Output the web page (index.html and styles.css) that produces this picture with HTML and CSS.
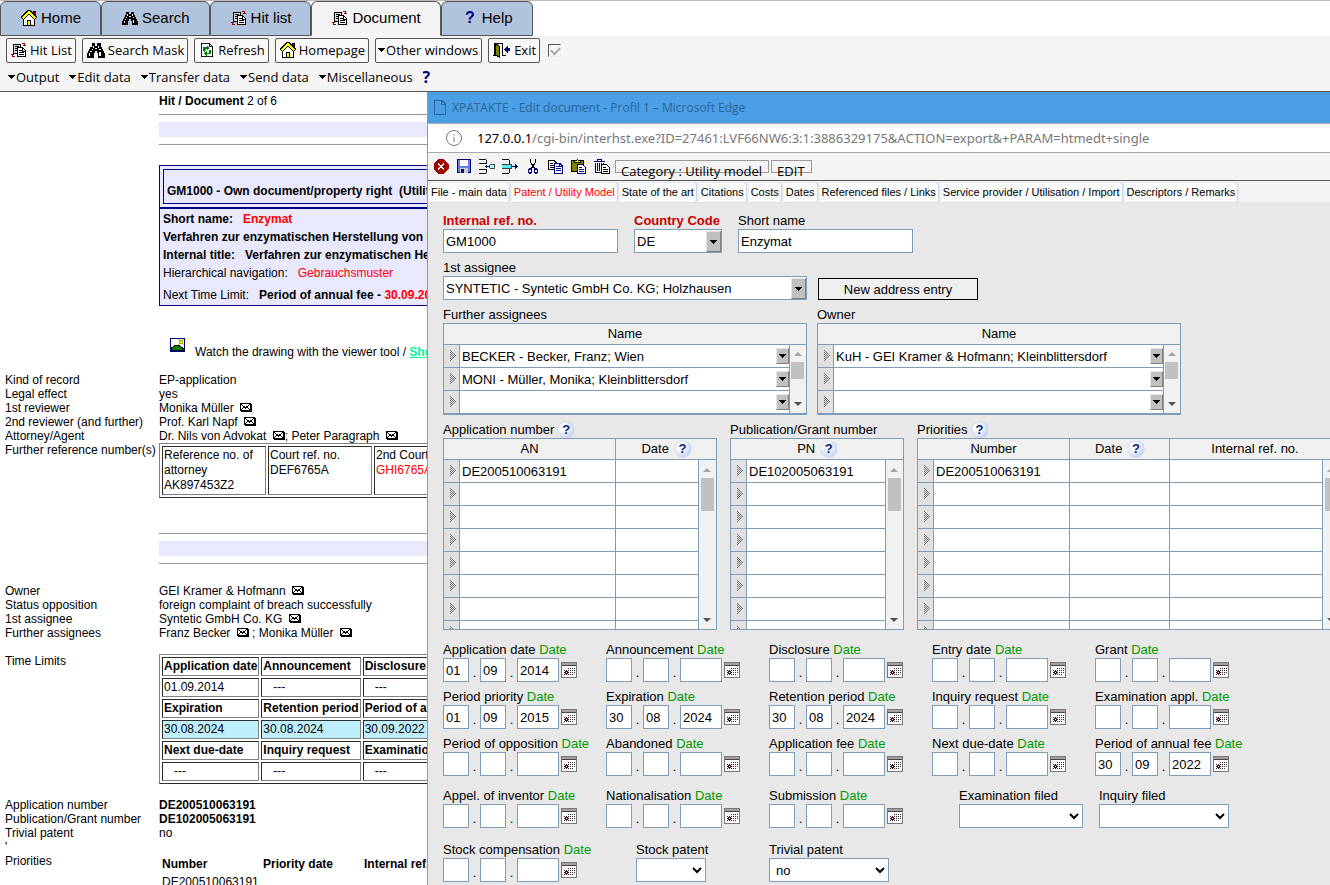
FILE: index.html
```html
<!DOCTYPE html>
<html lang="en">

<head>
    <meta charset="UTF-8">
    <meta name="viewport" content="width=device-width, initial-scale=1.0">
    <title>XPATAKTE - Document</title>
    <link rel="stylesheet" href="styles.css">
</head>

<body>
    <!-- icon sprite -->
    <svg class="sprite" aria-hidden="true">
        <defs>
            <pattern id="dither" width="2" height="2" patternUnits="userSpaceOnUse">
                <path fill="#777" d="M0 0h1v1H0zM1 1h1v1H1z" />
            </pattern>
        </defs>
        <symbol id="i-home" viewBox="0 0 16 16">
            <path fill="#c00" stroke="#000" d="M12.500 1.500h2v5h-2z" />
            <path fill="#fff" stroke="#000" d="M2.500 8v7.500h11V8L8 3z" />
            <path d="M1 8.500L8 1.500l7 7" fill="none" stroke="#000" stroke-width="4" />
            <path d="M1.500 8.500L8 2l6.500 6.500" fill="none" stroke="#ff0" stroke-width="2" />
            <path fill="#ff0" stroke="#000" d="M6.500 10.500h3v5h-3z" />
        </symbol>
        <symbol id="i-search" viewBox="0 0 16 14">
            <path d="M4 1h3v2h2V1h3v3h1v2h1v2h1v2h1v4h-6v-4H9V8H7v2H6v4H0v-4h1V8h1V6h1V4h1z" />
            <path fill="#fff" d="M5 3h1v2H5zM4 6h1v1H4zM3 8h1v1H3zM2 10h1v2H2zM10 3h1v2h-1zM11 6h1v1h-1zM11 9h1v3h-1zM7 5h2v1H7z" />
        </symbol>
        <symbol id="i-docs" viewBox="0 0 16 16">
            <path fill="#ddd" stroke="#000" d="M2.500 2.500h7v9h-7z" />
            <path stroke="#000" d="M4 4.500h4M4 6.500h2M4 8.500h2" />
            <path fill="#fff" stroke="#000" d="M6.500 5.500h5l3 3v6h-8z" />
            <path stroke="#000" d="M8 8.500h3M8 10.500h5M8 12.500h5M11.500 6v3h3" fill="none" />
            <path stroke="#900" fill="none" d="M11 1.500h2.500V4M12 3.500h3M0 12.500h3M1.500 12v2.500H4" />
        </symbol>
        <symbol id="i-refresh" viewBox="0 0 16 18">
            <path fill="#fff" stroke="#000" d="M1.500 1.500h9l4 4v11h-13z" />
            <path fill="none" stroke="#000" d="M10.500 1.500v4h4" />
            <path fill="none" stroke="#008000" stroke-width="2" d="M5 9V7h4M11 9v4H7" />
            <path fill="#008000" d="M8 4l3 3-3 3zM8 10l-3 3 3 3zM3 8h4l-2 3z" />
        </symbol>
        <symbol id="i-exit" viewBox="0 0 18 16">
            <path fill="none" stroke="#000" d="M0 13.500h3M1.500 13V1.500h8v12h3" />
            <path fill="#808000" stroke="#000" d="M2.500 1.500l4 3v11l-4-3z" />
            <path fill="#000080" d="M11 7l4-4v3h2v3h-2v3z" />
        </symbol>
        <symbol id="i-arrow" viewBox="0 0 7 4">
            <path d="M0 0h7L3.500 4z" />
        </symbol>
        <symbol id="i-mail" viewBox="0 0 12 9">
            <path fill="#fff" stroke="#000" d="M.5.500h10v7H.5z" />
            <path fill="none" stroke="#000" d="M1 1l4.500 4L10 1M1 7l3-3M10 7L7 4" />
            <path d="M11 1h1v8H1V8h10z" />
        </symbol>
        <symbol id="i-picture" viewBox="0 0 15 14">
            <path fill="#fff" stroke="#000080" d="M.5.500h14v13H.5z" />
            <path fill="#008000" stroke="#000" d="M1 12.500V10l2-1 2-2 2 1 1-1 3 2 3 2v1.500z" />
            <circle cx="11" cy="4" r="2" fill="#ff0" stroke="#aa0" />
            <path stroke="#cc0" d="M8 1l1 1M14 1l-1 1M8 7l1-1M13 6l1 1" />
        </symbol>
        <symbol id="i-page" viewBox="0 0 12 15">
            <path fill="none" stroke="#2b6599" d="M.5 1.500q0-1 1-1H8l3.500 3.500v9.500q0 1-1 1h-9q-1 0-1-1zM7.500.500V4.500h4" />
        </symbol>
        <symbol id="i-info" viewBox="0 0 16 16">
            <circle cx="8" cy="8" r="7.500" fill="none" stroke="#777" />
            <path fill="#777" d="M7.500 7h1v5h-1zM7.500 4h1v1.500h-1z" />
        </symbol>
        <symbol id="i-close" viewBox="0 0 16 16">
            <path fill="#a00000" d="M5 0h6l5 5v6l-5 5H5l-5-5V5z" />
            <path stroke="#fff" stroke-width="2" d="M5 5l6 6M11 5l-6 6" />
        </symbol>
        <symbol id="i-save" viewBox="0 0 15 15">
            <path fill="#6a7ae0" stroke="#000080" d="M.5.500h13v13h-12l-1-1z" />
            <path fill="#fff" d="M3 1h8v6H3z" />
            <path fill="#ccc" d="M3 9h8v5H3z" />
            <path fill="#000080" d="M4 10h3v4H4z" />
        </symbol>
        <symbol id="i-insert" viewBox="0 0 17 15">
            <path fill="none" stroke="#000" d="M0 .5h7.500v4H0M0 14.500h7.500v-4H0" />
            <path fill="#000080" d="M6 7.500L9 5v2h2v1H9v2z" />
            <path fill="#aff" stroke="#333" d="M11.500 5.500h5v4h-5z" />
        </symbol>
        <symbol id="i-append" viewBox="0 0 17 15">
            <path fill="none" stroke="#000" d="M0 .5h7.500v4M0 14.500h7.500v-4" />
            <path fill="#5ee" stroke="#333" d="M0 5.500h10.500v4H0" />
            <path fill="#000080" d="M11 7h3V5l3 2.500L14 10V8h-3z" />
        </symbol>
        <symbol id="i-cut" viewBox="0 0 11 15">
            <path fill="none" stroke="#000" d="M3 0v3l3.500 6M8 0v3L4.500 9" />
            <path fill="none" stroke="#000080" stroke-width="1.500" d="M4.500 8.500l-1.500 1.500h-1l-1 1v2l1 1h1l1-1V9.500zM6.500 8.500L8 10h1l1 1v2l-1 1H8l-1-1V9.500z" />
        </symbol>
        <symbol id="i-copy" viewBox="0 0 16 14">
            <path fill="#fff" stroke="#000" d="M.5.500h5l3 3v6h-8z" />
            <path stroke="#000" d="M2 3.500h3M2 5.500h4M2 7.500h4" />
            <path fill="#fff" stroke="#000080" d="M6.500 3.500h5l3 3v7h-8z" />
            <path stroke="#000080" fill="none" d="M8 6.500h3M8 8.500h5M8 10.500h5M11.500 4v3h3" />
        </symbol>
        <symbol id="i-paste" viewBox="0 0 16 15">
            <path fill="#808000" stroke="#000" d="M.5 1.500h12v11H.5z" />
            <path fill="#ff0" stroke="#000" d="M3.500 3.500v-2h2l1-1 1 1h2v2z" />
            <path fill="#fff" stroke="#000080" d="M6.500 5.500h5l3 3v6h-8z" />
            <path stroke="#000080" fill="none" d="M8 8.500h3M8 10.500h5M8 12.500h5" />
        </symbol>
        <symbol id="i-trash" viewBox="0 0 16 15">
            <path fill="none" stroke="#000080" d="M0 2.500h11M3.500 2V.500h4V2M1.500 4v9.500h8V4M3.500 4v8M5.500 4v8M7.500 4v8" />
            <path fill="#fff" stroke="#000" d="M7.500 5.500h5l3 3v6h-8z" />
            <path stroke="#000" fill="none" d="M9 8.500h3M9 10.500h5M9 12.500h5" />
        </symbol>
        <symbol id="i-cal" viewBox="0 0 16 16">
            <path fill="#fff" stroke="#777" d="M.5.500h15v15H.5z" />
            <path fill="#a8a0a0" d="M1 1h14v2H1z" />
            <path stroke="#444" d="M1 3.500h14" />
            <path fill="#412" d="M3 8h1v1H3zM5 8h1v1H5zM7 8h1v1H7zM4 9h3v1H4zM3 10h2v1H3zM6 10h2v1H6zM4 11h3v1H4zM3 12h1v1H3zM5 12h1v1H5zM7 12h1v1H7z" />
            <path fill="#333" d="M7 6h1v1H7zM9 6h1v1H9zM11 6h1v1h-1zM13 6h1v1h-1zM9 8h1v1H9zM11 8h1v1h-1zM13 8h1v1h-1zM9 10h1v1H9zM11 10h1v1h-1zM13 10h1v1h-1zM9 12h1v1H9zM11 12h1v1h-1z" />
        </symbol>
        <symbol id="i-mark" viewBox="0 0 6 12">
            <path fill="url(#dither)" d="M0 0l6 6-6 6z" />
        </symbol>
    </svg>

    <header class="top">
        <nav class="main-tabs">
            <a href="#"><svg class="icon"><use href="#i-home" /></svg>Home</a>
            <a href="#"><svg class="icon"><use href="#i-search" /></svg>Search</a>
            <a href="#"><svg class="icon"><use href="#i-docs" /></svg>Hit list</a>
            <a href="#" class="active"><svg class="icon"><use href="#i-docs" /></svg>Document</a>
            <a href="#"><b class="q">?</b>Help</a>
        </nav>
        <div class="toolbar">
            <button type="button"><svg class="icon"><use href="#i-docs" /></svg>Hit List</button>
            <button type="button"><svg class="icon wide"><use href="#i-search" /></svg>Search Mask</button>
            <button type="button"><svg class="icon"><use href="#i-refresh" /></svg>Refresh</button>
            <button type="button"><svg class="icon"><use href="#i-home" /></svg>Homepage</button>
            <button type="button" class="drop-btn"><svg class="arrow"><use href="#i-arrow" /></svg>Other windows</button>
            <button type="button"><svg class="icon wide"><use href="#i-exit" /></svg>Exit</button>
            <input type="checkbox" class="keep" aria-label="Keep window" checked disabled>
        </div>
        <nav class="menu">
            <a href="#"><svg class="arrow"><use href="#i-arrow" /></svg>Output</a>
            <a href="#"><svg class="arrow"><use href="#i-arrow" /></svg>Edit data</a>
            <a href="#"><svg class="arrow"><use href="#i-arrow" /></svg>Transfer data</a>
            <a href="#"><svg class="arrow"><use href="#i-arrow" /></svg>Send data</a>
            <a href="#"><svg class="arrow"><use href="#i-arrow" /></svg>Miscellaneous</a>
            <a href="#"><b class="q">?</b></a>
        </nav>
    </header>

    <main class="desk">
        <section class="doc">
            <div class="doc-body">
                <p class="hit"><b>Hit / Document</b> 2 of 6</p>
                <div class="band"></div>
                <div class="summary">
                    <div class="summary-head"><h1>GM1000 - Own document/property right&nbsp; (Utility model)</h1></div>
                    <div class="summary-text">
                        <p><b>Short name:</b> <b class="red">Enzymat</b></p>
                        <p><b>Verfahren zur enzymatischen Herstellung von Glucose</b></p>
                        <p><b>Internal title:</b> <b>Verfahren zur enzymatischen Herstellung</b></p>
                        <p><span>Hierarchical navigation:</span> <span class="red">Gebrauchsmuster</span></p>
                        <p class="limit"><span>Next Time Limit:</span> <b>Period of annual fee - <span class="red">30.09.2022</span></b></p>
                    </div>
                </div>
                <p class="viewer"><svg><use href="#i-picture" /></svg><span>Watch the drawing with the viewer tool / <a href="#">Show</a></span></p>
            </div>

            <dl class="facts">
                <dt>Kind of record</dt>
                <dd>EP-application</dd>
                <dt>Legal effect</dt>
                <dd>yes</dd>
                <dt>1st reviewer</dt>
                <dd>Monika Müller <svg class="mail"><use href="#i-mail" /></svg></dd>
                <dt>2nd reviewer (and further)</dt>
                <dd>Prof. Karl Napf <svg class="mail"><use href="#i-mail" /></svg></dd>
                <dt>Attorney/Agent</dt>
                <dd>Dr. Nils von Advokat <svg class="mail"><use href="#i-mail" /></svg>; Peter Paragraph <svg class="mail"><use href="#i-mail" /></svg></dd>
                <dt>Further reference number(s)</dt>
                <dd>
                    <table class="boxed refs">
                        <tr>
                            <td>Reference no. of<br>attorney<br>AK897453Z2</td>
                            <td>Court ref. no.<br>DEF6765A</td>
                            <td>2nd Court ref.<br><span class="red">GHI6765A</span></td>
                        </tr>
                    </table>
                </dd>
            </dl>

            <div class="doc-body second">
                <div class="band"></div>
            </div>

            <dl class="facts">
                <dt>Owner</dt>
                <dd>GEI Kramer &amp; Hofmann <svg class="mail"><use href="#i-mail" /></svg></dd>
                <dt>Status opposition</dt>
                <dd>foreign complaint of breach successfully</dd>
                <dt>1st assignee</dt>
                <dd>Syntetic GmbH Co. KG <svg class="mail"><use href="#i-mail" /></svg></dd>
                <dt>Further assignees</dt>
                <dd>Franz Becker <svg class="mail"><use href="#i-mail" /></svg> ; Monika Müller <svg class="mail"><use href="#i-mail" /></svg></dd>
            </dl>
            <dl class="facts">
                <dt>Time Limits</dt>
                <dd>
                    <table class="boxed limits">
                        <tr><th>Application date</th><th>Announcement</th><th>Disclosure</th></tr>
                        <tr><td>01.09.2014</td><td class="none">---</td><td class="none">---</td></tr>
                        <tr><th>Expiration</th><th>Retention period</th><th>Period of annual fee</th></tr>
                        <tr class="due"><td>30.08.2024</td><td>30.08.2024</td><td>30.09.2022</td></tr>
                        <tr><th>Next due-date</th><th>Inquiry request</th><th>Examination appl.</th></tr>
                        <tr><td class="none">---</td><td class="none">---</td><td class="none">---</td></tr>
                    </table>
                </dd>
            </dl>
            <dl class="facts">
                <dt>Application number</dt>
                <dd><b>DE200510063191</b></dd>
                <dt>Publication/Grant number</dt>
                <dd><b>DE102005063191</b></dd>
                <dt>Trivial patent</dt>
                <dd>no</dd>
                <dt>'</dt>
                <dd></dd>
                <dt>Priorities</dt>
                <dd>
                    <table class="plain">
                        <tr><th>Number</th><th>Priority date</th><th>Internal ref. no.</th></tr>
                        <tr><td>DE200510063191</td><td></td><td></td></tr>
                    </table>
                </dd>
            </dl>
        </section>

        <section class="window">
            <div class="title-bar"><svg><use href="#i-page" /></svg>XPATAKTE - Edit document - Profil 1 – Microsoft Edge</div>
            <div class="address-bar"><svg><use href="#i-info" /></svg><p><b>127.0.0.1</b>/cgi-bin/interhst.exe?ID=27461:LVF66NW6:3:1:3886329175&amp;ACTION=export&amp;+PARAM=htmedt+single</p></div>
            <div class="edit-bar">
                <button type="button" aria-label="Close"><svg><use href="#i-close" /></svg></button>
                <button type="button" aria-label="Save"><svg><use href="#i-save" /></svg></button>
                <button type="button" aria-label="Insert row"><svg><use href="#i-insert" /></svg></button>
                <button type="button" aria-label="Append row"><svg><use href="#i-append" /></svg></button>
                <button type="button" aria-label="Cut"><svg><use href="#i-cut" /></svg></button>
                <button type="button" aria-label="Copy"><svg><use href="#i-copy" /></svg></button>
                <button type="button" aria-label="Paste"><svg><use href="#i-paste" /></svg></button>
                <button type="button" aria-label="Delete"><svg><use href="#i-trash" /></svg></button>
                <span class="status">Category : Utility model</span>
                <span class="status">EDIT</span>
            </div>
            <nav class="form-tabs">
                <a href="#">File - main data</a>
                <a href="#" class="active">Patent / Utility Model</a>
                <a href="#">State of the art</a>
                <a href="#">Citations</a>
                <a href="#">Costs</a>
                <a href="#">Dates</a>
                <a href="#">Referenced files / Links</a>
                <a href="#">Service provider / Utilisation / Import</a>
                <a href="#">Descriptors / Remarks</a>
            </nav>

            <form class="form">
                <div class="row head-row">
                    <div class="field w-text">
                        <label for="ref" class="must">Internal ref. no.</label>
                        <input type="text" id="ref" value="GM1000">
                    </div>
                    <div class="field w-code">
                        <label for="country" class="must">Country Code</label>
                        <div class="combo"><select id="country"><option>DE</option></select><span class="drop"><svg class="arrow"><use href="#i-arrow" /></svg></span></div>
                    </div>
                    <div class="field w-text">
                        <label for="short">Short name</label>
                        <input type="text" id="short" value="Enzymat">
                    </div>
                </div>

                <div class="row pair-row">
                    <div class="field w-name">
                        <label for="assignee">1st assignee</label>
                        <div class="combo"><select id="assignee"><option>SYNTETIC - Syntetic GmbH Co. KG; Holzhausen</option></select><span class="drop"><svg class="arrow"><use href="#i-arrow" /></svg></span></div>
                    </div>
                    <button type="button" class="new-address">New address entry</button>
                </div>

                <div class="row pair-row">
                    <div class="field w-name">
                        <span class="caption">Further assignees</span>
                        <table class="grid names">
                            <colgroup><col class="c-mark"><col><col class="c-bar"></colgroup>
                            <tr><th colspan="3">Name</th></tr>
                            <tr>
                                <td class="mark"><svg><use href="#i-mark" /></svg></td>
                                <td><div class="pick"><input type="text" aria-label="Further assignee 1" value="BECKER - Becker, Franz; Wien"><button type="button" class="drop" aria-label="Choose"><svg class="arrow"><use href="#i-arrow" /></svg></button></div></td>
                                <td rowspan="3" class="bar"><div class="scroll"><i class="up"></i><i class="thumb"></i><i class="down"></i></div></td>
                            </tr>
                            <tr>
                                <td class="mark"><svg><use href="#i-mark" /></svg></td>
                                <td><div class="pick"><input type="text" aria-label="Further assignee 2" value="MONI - Müller, Monika; Kleinblittersdorf"><button type="button" class="drop" aria-label="Choose"><svg class="arrow"><use href="#i-arrow" /></svg></button></div></td>
                            </tr>
                            <tr>
                                <td class="mark"><svg><use href="#i-mark" /></svg></td>
                                <td><div class="pick"><input type="text" aria-label="Further assignee 3"><button type="button" class="drop" aria-label="Choose"><svg class="arrow"><use href="#i-arrow" /></svg></button></div></td>
                            </tr>
                        </table>
                    </div>
                    <div class="field w-name">
                        <span class="caption">Owner</span>
                        <table class="grid names">
                            <colgroup><col class="c-mark"><col><col class="c-bar"></colgroup>
                            <tr><th colspan="3">Name</th></tr>
                            <tr>
                                <td class="mark"><svg><use href="#i-mark" /></svg></td>
                                <td><div class="pick"><input type="text" aria-label="Owner 1" value="KuH - GEI Kramer &amp; Hofmann; Kleinblittersdorf"><button type="button" class="drop" aria-label="Choose"><svg class="arrow"><use href="#i-arrow" /></svg></button></div></td>
                                <td rowspan="3" class="bar"><div class="scroll"><i class="up"></i><i class="thumb"></i><i class="down"></i></div></td>
                            </tr>
                            <tr>
                                <td class="mark"><svg><use href="#i-mark" /></svg></td>
                                <td><div class="pick"><input type="text" aria-label="Owner 2"><button type="button" class="drop" aria-label="Choose"><svg class="arrow"><use href="#i-arrow" /></svg></button></div></td>
                            </tr>
                            <tr>
                                <td class="mark"><svg><use href="#i-mark" /></svg></td>
                                <td><div class="pick"><input type="text" aria-label="Owner 3"><button type="button" class="drop" aria-label="Choose"><svg class="arrow"><use href="#i-arrow" /></svg></button></div></td>
                            </tr>
                        </table>
                    </div>
                </div>

                <div class="row number-row">
                    <div class="field">
                        <span class="caption">Application number <button type="button" class="help">?</button></span>
                        <table class="grid numbers an">
                            <colgroup><col class="c-mark"><col class="c-an"><col class="c-date"><col class="c-bar"></colgroup>
                            <tr><th colspan="2">AN</th><th colspan="2">Date <button type="button" class="help">?</button></th></tr>
                            <tr>
                                <td class="mark"><svg><use href="#i-mark" /></svg></td>
                                <td><input type="text" aria-label="AN" value="DE200510063191"></td>
                                <td><input type="text" aria-label="Date"></td>
                                <td rowspan="8" class="bar"><div class="scroll"><i class="up"></i><i class="thumb"></i><i class="down"></i></div></td>
                            </tr>
                            <tr><td class="mark"><svg><use href="#i-mark" /></svg></td><td></td><td></td></tr>
                            <tr><td class="mark"><svg><use href="#i-mark" /></svg></td><td></td><td></td></tr>
                            <tr><td class="mark"><svg><use href="#i-mark" /></svg></td><td></td><td></td></tr>
                            <tr><td class="mark"><svg><use href="#i-mark" /></svg></td><td></td><td></td></tr>
                            <tr><td class="mark"><svg><use href="#i-mark" /></svg></td><td></td><td></td></tr>
                            <tr><td class="mark"><svg><use href="#i-mark" /></svg></td><td></td><td></td></tr>
                            <tr class="cut"><td class="mark"><svg viewBox="0 0 6 3"><path fill="url(#dither)" d="M0 0l3 3H0z" /></svg></td><td></td><td></td></tr>
                        </table>
                    </div>
                    <div class="field">
                        <span class="caption">Publication/Grant number</span>
                        <table class="grid numbers pn">
                            <colgroup><col class="c-mark"><col><col class="c-bar"></colgroup>
                            <tr><th colspan="3">PN <button type="button" class="help">?</button></th></tr>
                            <tr>
                                <td class="mark"><svg><use href="#i-mark" /></svg></td>
                                <td><input type="text" aria-label="PN" value="DE102005063191"></td>
                                <td rowspan="8" class="bar"><div class="scroll"><i class="up"></i><i class="thumb"></i><i class="down"></i></div></td>
                            </tr>
                            <tr><td class="mark"><svg><use href="#i-mark" /></svg></td><td></td></tr>
                            <tr><td class="mark"><svg><use href="#i-mark" /></svg></td><td></td></tr>
                            <tr><td class="mark"><svg><use href="#i-mark" /></svg></td><td></td></tr>
                            <tr><td class="mark"><svg><use href="#i-mark" /></svg></td><td></td></tr>
                            <tr><td class="mark"><svg><use href="#i-mark" /></svg></td><td></td></tr>
                            <tr><td class="mark"><svg><use href="#i-mark" /></svg></td><td></td></tr>
                            <tr class="cut"><td class="mark"><svg viewBox="0 0 6 3"><path fill="url(#dither)" d="M0 0l3 3H0z" /></svg></td><td></td></tr>
                        </table>
                    </div>
                    <div class="field">
                        <span class="caption">Priorities <button type="button" class="help">?</button></span>
                        <table class="grid numbers prio">
                            <colgroup><col class="c-mark"><col class="c-prio"><col class="c-pdate"><col><col class="c-bar"></colgroup>
                            <tr><th colspan="2">Number</th><th>Date <button type="button" class="help">?</button></th><th colspan="2">Internal ref. no.</th></tr>
                            <tr>
                                <td class="mark"><svg><use href="#i-mark" /></svg></td>
                                <td><input type="text" aria-label="Priority number" value="DE200510063191"></td>
                                <td><input type="text" aria-label="Priority date"></td>
                                <td><input type="text" aria-label="Priority internal ref. no."></td>
                                <td rowspan="8" class="bar"><div class="scroll"><i class="up"></i><i class="thumb"></i><i class="down"></i></div></td>
                            </tr>
                            <tr><td class="mark"><svg><use href="#i-mark" /></svg></td><td></td><td></td><td></td></tr>
                            <tr><td class="mark"><svg><use href="#i-mark" /></svg></td><td></td><td></td><td></td></tr>
                            <tr><td class="mark"><svg><use href="#i-mark" /></svg></td><td></td><td></td><td></td></tr>
                            <tr><td class="mark"><svg><use href="#i-mark" /></svg></td><td></td><td></td><td></td></tr>
                            <tr><td class="mark"><svg><use href="#i-mark" /></svg></td><td></td><td></td><td></td></tr>
                            <tr><td class="mark"><svg><use href="#i-mark" /></svg></td><td></td><td></td><td></td></tr>
                            <tr class="cut"><td class="mark"><svg viewBox="0 0 6 3"><path fill="url(#dither)" d="M0 0l3 3H0z" /></svg></td><td></td><td></td><td></td></tr>
                        </table>
                    </div>
                </div>

                <div class="dates">
                    <div class="date">
                        <p><label for="d1">Application date</label> <a href="#">Date</a></p>
                        <div class="parts"><input id="d1" value="01"><i>.</i><input aria-label="Month" value="09"><i>.</i><input class="year" aria-label="Year" value="2014"><svg><use href="#i-cal" /></svg></div>
                    </div>
                    <div class="date">
                        <p><label for="d2">Announcement</label> <a href="#">Date</a></p>
                        <div class="parts"><input id="d2"><i>.</i><input aria-label="Month"><i>.</i><input class="year" aria-label="Year"><svg><use href="#i-cal" /></svg></div>
                    </div>
                    <div class="date">
                        <p><label for="d3">Disclosure</label> <a href="#">Date</a></p>
                        <div class="parts"><input id="d3"><i>.</i><input aria-label="Month"><i>.</i><input class="year" aria-label="Year"><svg><use href="#i-cal" /></svg></div>
                    </div>
                    <div class="date">
                        <p><label for="d4">Entry date</label> <a href="#">Date</a></p>
                        <div class="parts"><input id="d4"><i>.</i><input aria-label="Month"><i>.</i><input class="year" aria-label="Year"><svg><use href="#i-cal" /></svg></div>
                    </div>
                    <div class="date">
                        <p><label for="d5">Grant</label> <a href="#">Date</a></p>
                        <div class="parts"><input id="d5"><i>.</i><input aria-label="Month"><i>.</i><input class="year" aria-label="Year"><svg><use href="#i-cal" /></svg></div>
                    </div>
                    <div class="date">
                        <p><label for="d6">Period priority</label> <a href="#">Date</a></p>
                        <div class="parts"><input id="d6" value="01"><i>.</i><input aria-label="Month" value="09"><i>.</i><input class="year" aria-label="Year" value="2015"><svg><use href="#i-cal" /></svg></div>
                    </div>
                    <div class="date">
                        <p><label for="d7">Expiration</label> <a href="#">Date</a></p>
                        <div class="parts"><input id="d7" value="30"><i>.</i><input aria-label="Month" value="08"><i>.</i><input class="year" aria-label="Year" value="2024"><svg><use href="#i-cal" /></svg></div>
                    </div>
                    <div class="date">
                        <p><label for="d8">Retention period</label> <a href="#">Date</a></p>
                        <div class="parts"><input id="d8" value="30"><i>.</i><input aria-label="Month" value="08"><i>.</i><input class="year" aria-label="Year" value="2024"><svg><use href="#i-cal" /></svg></div>
                    </div>
                    <div class="date">
                        <p><label for="d9">Inquiry request</label> <a href="#">Date</a></p>
                        <div class="parts"><input id="d9"><i>.</i><input aria-label="Month"><i>.</i><input class="year" aria-label="Year"><svg><use href="#i-cal" /></svg></div>
                    </div>
                    <div class="date">
                        <p><label for="d10">Examination appl.</label> <a href="#">Date</a></p>
                        <div class="parts"><input id="d10"><i>.</i><input aria-label="Month"><i>.</i><input class="year" aria-label="Year"><svg><use href="#i-cal" /></svg></div>
                    </div>
                    <div class="date">
                        <p><label for="d11">Period of opposition</label> <a href="#">Date</a></p>
                        <div class="parts"><input id="d11"><i>.</i><input aria-label="Month"><i>.</i><input class="year" aria-label="Year"><svg><use href="#i-cal" /></svg></div>
                    </div>
                    <div class="date">
                        <p><label for="d12">Abandoned</label> <a href="#">Date</a></p>
                        <div class="parts"><input id="d12"><i>.</i><input aria-label="Month"><i>.</i><input class="year" aria-label="Year"><svg><use href="#i-cal" /></svg></div>
                    </div>
                    <div class="date">
                        <p><label for="d13">Application fee</label> <a href="#">Date</a></p>
                        <div class="parts"><input id="d13"><i>.</i><input aria-label="Month"><i>.</i><input class="year" aria-label="Year"><svg><use href="#i-cal" /></svg></div>
                    </div>
                    <div class="date">
                        <p><label for="d14">Next due-date</label> <a href="#">Date</a></p>
                        <div class="parts"><input id="d14"><i>.</i><input aria-label="Month"><i>.</i><input class="year" aria-label="Year"><svg><use href="#i-cal" /></svg></div>
                    </div>
                    <div class="date">
                        <p><label for="d15">Period of annual fee</label> <a href="#">Date</a></p>
                        <div class="parts"><input id="d15" value="30"><i>.</i><input aria-label="Month" value="09"><i>.</i><input class="year" aria-label="Year" value="2022"><svg><use href="#i-cal" /></svg></div>
                    </div>
                </div>

                <div class="row last-row">
                    <div class="date">
                        <p><label for="d16">Appel. of inventor</label> <a href="#">Date</a></p>
                        <div class="parts"><input id="d16"><i>.</i><input aria-label="Month"><i>.</i><input class="year" aria-label="Year"><svg><use href="#i-cal" /></svg></div>
                    </div>
                    <div class="date">
                        <p><label for="d17">Nationalisation</label> <a href="#">Date</a></p>
                        <div class="parts"><input id="d17"><i>.</i><input aria-label="Month"><i>.</i><input class="year" aria-label="Year"><svg><use href="#i-cal" /></svg></div>
                    </div>
                    <div class="date">
                        <p><label for="d18">Submission</label> <a href="#">Date</a></p>
                        <div class="parts"><input id="d18"><i>.</i><input aria-label="Month"><i>.</i><input class="year" aria-label="Year"><svg><use href="#i-cal" /></svg></div>
                    </div>
                    <div class="field exam">
                        <label for="exam">Examination filed</label>
                        <select id="exam"><option></option></select>
                    </div>
                    <div class="field inquiry">
                        <label for="inquiry">Inquiry filed</label>
                        <select id="inquiry"><option></option></select>
                    </div>
                </div>

                <div class="row last-row">
                    <div class="date">
                        <p><label for="d19">Stock compensation</label> <a href="#">Date</a></p>
                        <div class="parts"><input id="d19"><i>.</i><input aria-label="Month"><i>.</i><input class="year" aria-label="Year"><svg><use href="#i-cal" /></svg></div>
                    </div>
                    <div class="field stock">
                        <label for="stock">Stock patent</label>
                        <select id="stock"><option></option></select>
                    </div>
                    <div class="field trivial">
                        <label for="trivial">Trivial patent</label>
                        <select id="trivial"><option>no</option></select>
                    </div>
                </div>
            </form>
        </section>
    </main>
</body>

</html>
```
FILE: styles.css
```css
* {
    margin: 0;
    padding: 0;
    box-sizing: border-box;
}

body {
    display: flex;
    flex-direction: column;
    height: 100vh;
    overflow: hidden;
    background: #fff;
    color: #000;
    font: 12px/14px "Liberation Sans", Arial, sans-serif;
}

a {
    color: inherit;
    text-decoration: none;
}

i {
    font-style: normal;
}

svg {
    flex: none;
    shape-rendering: crispEdges;
}

.sprite {
    position: absolute;
    width: 0;
    height: 0;
}

.icon {
    width: 16px;
    height: 16px;
}

.icon.wide {
    width: 18px;
}

.arrow {
    width: 7px;
    height: 4px;
}

.q {
    color: #000080;
    font-size: 16px;
}

.red {
    color: #f00;
}

/* header */
.top {
    flex: none;
    background: #f4f4f4;
    border-bottom: 1px solid #555;
}

.main-tabs {
    display: flex;
    height: 36px;
    background: #fff;
    border-top: 1px solid #bbb;
}

.main-tabs a {
    display: flex;
    align-items: center;
    gap: 4px;
    padding: 0 19px 2px 20px;
    background: #b0c4de;
    border: 1px solid #555;
    border-radius: 6px 6px 0 0;
    font-size: 15px;
}

.main-tabs a.active {
    background: #f4f4f4;
    border-bottom-color: #f4f4f4;
}

.main-tabs .q {
    width: 16px;
    text-align: center;
}

.toolbar {
    display: flex;
    align-items: center;
    gap: 6px;
    padding: 2px 6px 0;
}

.toolbar button {
    display: flex;
    align-items: center;
    gap: 3px;
    height: 25px;
    padding: 0 3px 2px 4px;
    background: #f8f8f8;
    border: 1px solid #555;
    border-radius: 2px;
    font: 13px/20px "Open Sans", sans-serif;
}

.toolbar .drop-btn {
    gap: 1px;
    padding-left: 2px;
}

.keep {
    appearance: none;
    width: 13px;
    height: 13px;
    margin-left: 2px;
    border: 1px solid;
    border-color: #555 #eee #eee #555;
}

.keep::after {
    content: "";
    display: block;
    width: 7px;
    height: 4px;
    margin: 2px;
    border: solid #aaa;
    border-width: 0 0 2px 2px;
    transform: rotate(-45deg);
}

.menu {
    display: flex;
    align-items: center;
    gap: 10px;
    height: 28px;
    padding: 0 8px;
    font: 13px/20px "Open Sans", sans-serif;
}

.menu a {
    display: flex;
    align-items: center;
    gap: 1px;
}

.desk {
    display: flex;
    flex: 1;
    min-height: 0;
}

/* document view */
.doc {
    flex: 0 0 427px;
    overflow: hidden;
    padding-left: 5px;
    white-space: nowrap;
}

.doc-body {
    padding: 2px 0 14px 154px;
}

.doc-body.second {
    padding: 21px 0 20px 154px;
}

.hit {
    margin-bottom: 6px;
}

.band {
    height: 31px;
    border: solid #999;
    border-width: 1px 0;
    background: #e8e8ff content-box;
    padding: 7px 0;
}

.summary {
    width: 600px;
    margin-top: 20px;
    background: #e8e8ff;
    border: 1px solid #000080;
}

.summary-head {
    padding: 3px;
    border-bottom: 2px solid #000080;
}

.summary-head h1 {
    padding: 14px 3px 5px;
    border: 1px solid #000080;
    font-size: 12px;
    line-height: 14px;
}

.summary-text {
    padding: 1px 3px;
    line-height: 18px;
}

.summary-text p {
    display: flex;
    gap: 10px;
}

.summary-text .limit {
    margin-top: 4px;
}

.viewer {
    display: flex;
    gap: 10px;
    padding: 32px 0 0 11px;
}

.viewer svg {
    width: 15px;
    height: 14px;
}

.viewer span {
    padding-top: 7px;
}

.viewer a {
    color: #00fa9a;
    font-weight: bold;
    text-decoration: underline;
}

.facts {
    display: grid;
    grid-template-columns: 154px 1fr;
    margin-bottom: 14px;
}

.facts dt {
    height: 14px;
}

.mail {
    width: 12px;
    height: 9px;
    margin-left: 3px;
}

.boxed {
    border: 1px solid;
    border-color: #808080 #2c2c2c #2c2c2c #808080;
    border-spacing: 2px;
    line-height: 15px;
}

.boxed td,
.boxed th {
    padding: 1px;
    border: 1px solid;
    border-color: #2c2c2c #808080 #808080 #2c2c2c;
    text-align: left;
    vertical-align: top;
}

.boxed .none {
    padding-left: 11px;
}

.boxed .due td {
    background: #bfefff;
}

.refs td {
    min-width: 104px;
}

.plain {
    border-spacing: 3px;
    line-height: 15px;
    text-align: left;
}

.plain th {
    min-width: 98px;
}

/* popup window */
.window {
    flex: 1;
    min-width: 0;
    overflow: hidden;
    background: #e8e8e8;
    border-left: 1px solid #999;
    white-space: nowrap;
}

.title-bar {
    display: flex;
    align-items: center;
    gap: 6px;
    height: 32px;
    padding: 0 6px;
    background: #4a9fe5;
    border-bottom: 1px solid #aaa;
    color: #2b6599;
    font: 12px/18px "Open Sans", sans-serif;
}

.title-bar svg {
    width: 12px;
    height: 15px;
}

.address-bar {
    display: flex;
    align-items: center;
    gap: 15px;
    height: 29px;
    padding: 0 18px;
    background: #fff;
    border-bottom: 1px solid #aaa;
    color: #777;
    font: 13px/20px "Noto Sans", sans-serif;
}

.address-bar svg {
    width: 16px;
    height: 16px;
    shape-rendering: auto;
}

.address-bar b {
    color: #000;
    font-weight: normal;
}

.edit-bar {
    display: flex;
    align-items: center;
    gap: 1px;
    height: 28px;
    padding: 0 2px;
    background: #f4f4f4;
    border-bottom: 1px solid #555;
}

.edit-bar button {
    display: flex;
    align-items: center;
    justify-content: center;
    width: 22px;
    height: 22px;
    background: none;
    border: 0;
}

.edit-bar svg {
    width: 16px;
    height: 15px;
}

.edit-bar .status {
    height: 13px;
    margin-left: 1px;
    padding: 0 6px 0 5px;
    border: 1px solid #999;
    font: 13px/20px "Open Sans", sans-serif;
}

.form-tabs {
    display: flex;
    gap: 3px;
    height: 21px;
    padding: 2px 0 0 1px;
    background: #f4f4f4;
}

.form-tabs a {
    padding: 0 2px;
    background: #fbfbfb;
    border-radius: 2px;
    box-shadow: 1px 0 2px #b8cce4;
    font: 11px/18px "Liberation Sans", Arial, sans-serif;
}

.form-tabs .active {
    color: #f00;
}

/* form */
.form {
    padding: 10px 15px 0;
    font-size: 13px;
    line-height: 17px;
}

.form input,
.form select {
    width: 100%;
    height: 24px;
    padding: 0 2px;
    background: #fff;
    border: 1px solid #7f9db9;
    border-radius: 0;
    color: #000;
    font: 13px "Liberation Sans", Arial, sans-serif;
}

.row {
    display: flex;
    margin-bottom: 6px;
}

.field label,
.field .caption {
    display: flex;
    align-items: center;
    gap: 4px;
    height: 17px;
}

.field .must {
    color: #c00;
    font-weight: bold;
}

.head-row {
    gap: 16px;
}

.pair-row {
    gap: 10px;
}

.w-text {
    width: 175px;
}

.w-code {
    width: 88px;
}

.w-name {
    width: 364px;
}

.combo {
    display: flex;
    height: 24px;
    background: #fff;
    border: 1px solid #7f9db9;
}

.combo select {
    appearance: none;
    flex: 1;
    height: 22px;
    border: 0;
}

.drop {
    display: flex;
    align-items: center;
    justify-content: center;
    background: #c0c0c0;
    border: 1px solid;
    border-color: #e4e4e4 #808080 #808080 #e4e4e4;
}

.combo .drop {
    width: 15px;
    margin-top: 1px;
}

.new-address {
    align-self: flex-end;
    width: 160px;
    height: 22px;
    margin-left: 1px;
    background: #efefef;
    border: 1px solid #000;
    font: 13px "Liberation Sans", Arial, sans-serif;
}

/* data grids */
.grid {
    table-layout: fixed;
    width: 364px;
    border-collapse: collapse;
    background: #fff;
}

.grid th,
.grid td {
    height: 23px;
    border: 1px solid #7f9db9;
}

.grid th {
    height: 21px;
    background: #f0f0f0;
    font-weight: normal;
    line-height: 16px;
}

.grid input {
    display: block;
    height: 22px;
    border: 0;
}

.grid .mark {
    background: #e1e1e1;
    text-align: center;
}

.grid .mark svg {
    display: block;
    width: 6px;
    height: 12px;
    margin: 0 3px 0 auto;
}

.grid .bar {
    background: #f1f1f1;
}

.grid .cut td {
    height: 9px;
}

.grid .cut svg {
    height: 3px;
    margin-top: 5px;
}

.c-mark {
    width: 16px;
}

.c-bar {
    width: 18px;
}

.c-an {
    width: 156px;
}

.c-prio {
    width: 136px;
}

.c-pdate {
    width: 100px;
}

.an {
    width: 274px;
}

.pn {
    width: 174px;
}

.prio {
    width: 424px;
}

.names {
    border-bottom: 2px solid #7f9db9;
}

.names .c-bar {
    width: 17px;
}

.names .bar {
    border-left: 0;
}

.pick {
    display: flex;
    align-items: center;
}

.pick input {
    flex: 1;
    min-width: 0;
}

.pick .drop {
    width: 13px;
    height: 16px;
}

.scroll {
    display: flex;
    flex-direction: column;
    align-items: center;
    height: 68px;
    padding: 7px 0;
}

.scroll .up,
.scroll .down {
    border: 4px solid transparent;
}

.scroll .up {
    border-top: 0;
    border-bottom-color: #a3a3a3;
}

.scroll .down {
    margin-top: auto;
    border-bottom: 0;
    border-top-color: #505050;
}

.scroll .thumb {
    width: 13px;
    height: 17px;
    margin-top: 6px;
    background: #c1c1c1;
}

.numbers .scroll {
    height: 168px;
}

.numbers .thumb {
    height: 33px;
}

.number-row {
    gap: 13px;
    margin-bottom: 11px;
}

.help {
    width: 16px;
    height: 16px;
    background: radial-gradient(circle at 6px 6px, #fff 20%, #a9bdf0);
    border: 0;
    border-radius: 8px;
    box-shadow: 0 0 1px #8094c8;
    color: #002080;
    font: bold 13px/16px "Liberation Sans", Arial, sans-serif;
}

.grid .help {
    margin-left: 2px;
}

/* dates */
.dates {
    display: grid;
    grid-template-columns: repeat(5, 163px);
    row-gap: 6px;
    margin-bottom: 11px;
}

.date a {
    color: #090;
}

.parts {
    display: flex;
    align-items: center;
}

.parts input {
    width: 26px;
}

.parts .year {
    width: 42px;
}

.parts i {
    width: 11px;
    padding-top: 5px;
    text-align: center;
}

.parts svg {
    width: 16px;
    height: 16px;
    margin-left: 2px;
}

.last-row {
    margin-bottom: 13px;
}

.last-row .date {
    width: 163px;
}

.exam {
    width: 124px;
    margin: 0 16px 0 27px;
}

.inquiry {
    width: 130px;
}

.stock {
    width: 70px;
    margin: 0 63px 0 30px;
}

.trivial {
    width: 120px;
}
```
